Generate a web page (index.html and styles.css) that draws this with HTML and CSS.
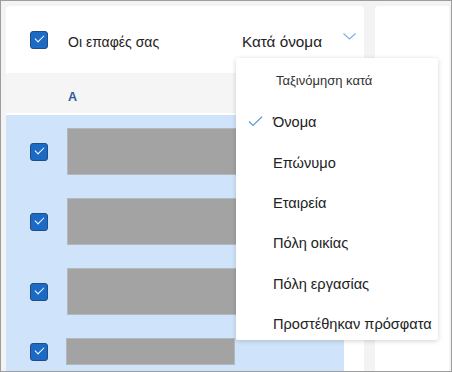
FILE: index.html
```html
<!DOCTYPE html>
<html lang="el">

<head>
    <meta charset="UTF-8">
    <meta name="viewport" content="width=device-width, initial-scale=1.0">
    <title>Οι επαφές σας</title>
    <link rel="stylesheet" href="styles.css">
</head>

<body>
    <div class="frame">
        <div class="contacts">
            <div class="contacts-header">
                <span class="checkbox checked"></span>
                <span class="title">Οι επαφές σας</span>
                <button class="sort-button">
                    <span>Κατά όνομα</span>
                    <svg class="chevron" width="13" height="7" viewBox="0 0 13 7">
                        <path d="M0.5 0.5 L6.5 6 L12.5 0.5" fill="none" stroke="#7fb0e0" stroke-width="1.2" />
                    </svg>
                </button>
            </div>
            <div class="letter-header">A</div>
            <div class="contact-list">
                <div class="contact-row">
                    <span class="checkbox checked"></span>
                    <div class="placeholder"></div>
                </div>
                <div class="contact-row">
                    <span class="checkbox checked"></span>
                    <div class="placeholder"></div>
                </div>
                <div class="contact-row">
                    <span class="checkbox checked"></span>
                    <div class="placeholder"></div>
                </div>
                <div class="contact-row last">
                    <span class="checkbox checked"></span>
                    <div class="placeholder short"></div>
                </div>
            </div>
        </div>
        <div class="side-panel"></div>

        <!-- menu de ordenação aberto -->
        <div class="sort-menu">
            <div class="sort-menu-title">Ταξινόμηση κατά</div>
            <ul class="sort-items">
                <li class="sort-item selected">
                    <svg class="tick" width="15" height="11" viewBox="0 0 15 11">
                        <path d="M1 5.5 L5 9.5 L14 0.8" fill="none" stroke="#5e9bd6" stroke-width="1.2" />
                    </svg>
                    <span>Όνομα</span>
                </li>
                <li class="sort-item"><span>Επώνυμο</span></li>
                <li class="sort-item"><span>Εταιρεία</span></li>
                <li class="sort-item"><span>Πόλη οικίας</span></li>
                <li class="sort-item"><span>Πόλη εργασίας</span></li>
                <li class="sort-item"><span>Προστέθηκαν πρόσφατα</span></li>
            </ul>
        </div>
    </div>
</body>

</html>
```

FILE: styles.css
```css
* {
    margin: 0;
    padding: 0;
    box-sizing: border-box;
}

body {
    font-family: 'Liberation Sans', Arial, sans-serif;
    color: #222;
}

.frame {
    position: relative;
    width: 452px;
    height: 372px;
    border: 1px solid #9d9d9d;
    background-color: #f3f3f3;
    padding: 5px 2px 0 5px;
    display: flex;
    gap: 11px;
    overflow: hidden;
}

.contacts {
    width: 358px;
    background-color: #fff;
    border-radius: 4px 4px 0 0;
    display: flex;
    flex-direction: column;
    overflow: hidden;
}

.contacts-header {
    height: 67px;
    display: flex;
    align-items: center;
    padding: 0 8px 0 24px;
    flex-shrink: 0;
}

.checkbox {
    width: 18px;
    height: 18px;
    border-radius: 3px;
    flex-shrink: 0;
    position: relative;
}

.checkbox.checked {
    background-color: #1b6ac6;
    border: 1px solid #234d80;
}

.checkbox.checked::after {
    content: '';
    position: absolute;
    left: 4px;
    top: 3px;
    width: 8px;
    height: 4px;
    border-left: 1.5px solid #fff;
    border-bottom: 1.5px solid #fff;
    transform: rotate(-45deg);
}

.title {
    margin-left: 20px;
    font-size: 14px;
    flex: 1;
    margin-top: 4px;
}

.sort-button {
    display: flex;
    align-items: center;
    background: none;
    border: none;
    font-family: inherit;
    font-size: 15.3px;
    color: #222;
    margin-top: 4px;
}

.chevron {
    margin-left: 21px;
    margin-top: -10px;
}

.letter-header {
    height: 42px;
    background-color: #f5f5f5;
    padding-left: 62px;
    padding-top: 17px;
    font-size: 12.5px;
    font-weight: bold;
    color: #2d5c9b;
    border-bottom: 2px solid #fff;
    flex-shrink: 0;
}

.contact-list {
    width: 338px;
    flex: 1;
    background-color: #cfe4fa;
    padding-top: 13px;
    display: flex;
    flex-direction: column;
    gap: 23px;
}

.contact-row {
    display: flex;
    align-items: center;
    padding-left: 24px;
    gap: 19px;
}

.placeholder {
    width: 240px;
    height: 47px;
    background-color: #a3a3a3;
    border: 1px solid #b3b8bd;
}

.placeholder.short {
    width: 169px;
    height: 27px;
    margin-left: -1px;
}

.side-panel {
    flex: 1;
    background-color: #fff;
    border-radius: 4px 0 0 0;
}

.sort-menu {
    position: absolute;
    left: 235px;
    top: 57px;
    width: 202px;
    height: 282px;
    background-color: #fff;
    box-shadow: 0 1px 5px rgba(0, 0, 0, 0.18);
    border-radius: 2px;
    overflow: hidden;
}

.sort-menu-title {
    height: 44px;
    display: flex;
    align-items: center;
    padding-left: 40px;
    font-size: 13px;
    color: #333;
}

.sort-items {
    list-style: none;
}

.sort-item {
    height: 40.4px;
    display: flex;
    align-items: center;
    padding-left: 37px;
    font-size: 14.6px;
    color: #222;
    position: relative;
}

.sort-item .tick {
    position: absolute;
    left: 12px;
    top: 14px;
}
```
